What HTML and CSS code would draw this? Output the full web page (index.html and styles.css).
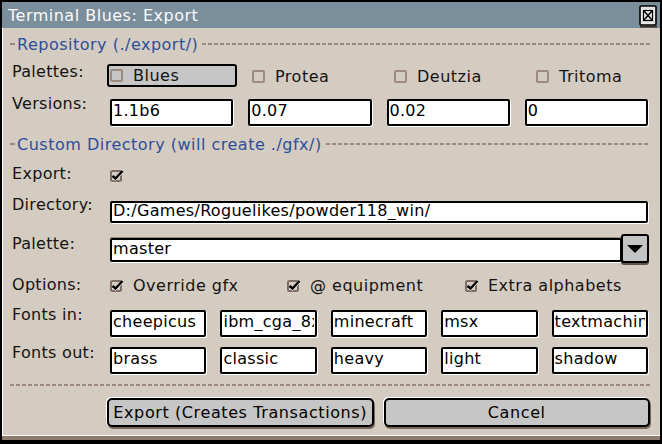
FILE: index.html
```html
<!DOCTYPE html>
<html>
<head>
<meta charset="utf-8">
<title>Terminal Blues: Export</title>
<link rel="stylesheet" href="styles.css">
</head>
<body>
<div class="win">
  <div class="titlebar">
    <span class="title">Terminal Blues: Export</span>
    <span class="close">
      <svg width="18" height="23" viewBox="0 0 18 23">
        <rect x="1" y="1" width="16" height="19" rx="1" fill="#e6e6e6" stroke="#000" stroke-width="1.6"/>
        <rect x="1" y="20.6" width="17" height="2" fill="#3c332e"/>
        <rect x="4.5" y="5.5" width="9" height="10" fill="none" stroke="#000" stroke-width="1.2"/>
        <path d="M5 6 L13 15 M13 6 L5 15" stroke="#000" stroke-width="1.4" fill="none"/>
      </svg>
    </span>
  </div>
  <div class="body">
    <div class="heading h-repo"><span class="lead"></span><span class="htext">Repository (./export/)</span><span class="rule"></span></div>

    <div class="row row-palettes">
      <div class="label lb-2">Palettes:</div>
      <div class="grid4">
        <div class="opt selected"><span class="box"></span>Blues</div>
        <div class="opt"><span class="box"></span>Protea</div>
        <div class="opt"><span class="box"></span>Deutzia</div>
        <div class="opt"><span class="box"></span>Tritoma</div>
      </div>
    </div>

    <div class="row row-versions">
      <div class="label lb-5">Versions:</div>
      <div class="grid4">
        <input class="field" value="1.1b6" readonly>
        <input class="field" value="0.07" readonly>
        <input class="field" value="0.02" readonly>
        <input class="field" value="0" readonly>
      </div>
    </div>

    <div class="heading h-custom"><span class="lead"></span><span class="htext">Custom Directory (will create ./gfx/)</span><span class="rule"></span></div>

    <div class="row row-export">
      <div class="label lb-2">Export:</div>
      <div class="single">
        <svg class="check" width="14" height="13" viewBox="0 0 14 13"><rect x="1" y="2" width="10" height="10" rx="1.5" fill="none" stroke="#7d6d62" stroke-width="2"/><path d="M2.5 8.5 L5.5 11 L12.5 3.5" stroke="#fff" stroke-width="1.6" fill="none"/><path d="M2.5 7 L5.5 9.5 L12.5 2" stroke="#000" stroke-width="2.4" fill="none"/></svg>
      </div>
    </div>

    <div class="row row-dir">
      <div class="label lb-6">Directory:</div>
      <input class="field" value="D:/Games/Roguelikes/powder118_win/" readonly>
    </div>

    <div class="row row-palette">
      <div class="label lb-4">Palette:</div>
      <div class="combo">
        <input class="field" value="master" readonly>
        <span class="drop"><svg width="16" height="8" viewBox="0 0 16 8"><polygon points="0,0 16,0 8,8" fill="#000"/></svg></span>
      </div>
    </div>

    <div class="row row-options">
      <div class="label lb-2">Options:</div>
      <div class="grid3">
        <div class="copt"><svg class="check" width="14" height="13" viewBox="0 0 14 13"><rect x="1" y="2" width="10" height="10" rx="1.5" fill="none" stroke="#7d6d62" stroke-width="2"/><path d="M2.5 8.5 L5.5 11 L12.5 3.5" stroke="#fff" stroke-width="1.6" fill="none"/><path d="M2.5 7 L5.5 9.5 L12.5 2" stroke="#000" stroke-width="2.4" fill="none"/></svg>Override gfx</div>
        <div class="copt"><svg class="check" width="14" height="13" viewBox="0 0 14 13"><rect x="1" y="2" width="10" height="10" rx="1.5" fill="none" stroke="#7d6d62" stroke-width="2"/><path d="M2.5 8.5 L5.5 11 L12.5 3.5" stroke="#fff" stroke-width="1.6" fill="none"/><path d="M2.5 7 L5.5 9.5 L12.5 2" stroke="#000" stroke-width="2.4" fill="none"/></svg>@ equipment</div>
        <div class="copt"><svg class="check" width="14" height="13" viewBox="0 0 14 13"><rect x="1" y="2" width="10" height="10" rx="1.5" fill="none" stroke="#7d6d62" stroke-width="2"/><path d="M2.5 8.5 L5.5 11 L12.5 3.5" stroke="#fff" stroke-width="1.6" fill="none"/><path d="M2.5 7 L5.5 9.5 L12.5 2" stroke="#000" stroke-width="2.4" fill="none"/></svg>Extra alphabets</div>
      </div>
    </div>

    <div class="row row-fin">
      <div class="label lb-5">Fonts in:</div>
      <div class="grid5">
        <input class="field" value="cheepicus" readonly>
        <input class="field" value="ibm_cga_8x8" readonly>
        <input class="field" value="minecraft" readonly>
        <input class="field" value="msx" readonly>
        <input class="field" value="textmachine" readonly>
      </div>
    </div>

    <div class="row row-fout">
      <div class="label lb-4">Fonts out:</div>
      <div class="grid5">
        <input class="field" value="brass" readonly>
        <input class="field" value="classic" readonly>
        <input class="field" value="heavy" readonly>
        <input class="field" value="light" readonly>
        <input class="field" value="shadow" readonly>
      </div>
    </div>

    <div class="divider"></div>

    <div class="buttons">
      <button class="btn">Export (Creates Transactions)</button>
      <button class="btn">Cancel</button>
    </div>
  </div>
  <div class="bottom"></div>
</div>
</body>
</html>
```

FILE: styles.css
```css
* { box-sizing: border-box; }
html, body { margin: 0; padding: 0; background: #d4ccc0; }
body {
  font-family: "DejaVu Sans", sans-serif;
  font-size: 16px;
  letter-spacing: 0.5px;
  color: #141414;
}
.win {
  width: 662px;
  height: 444px;
  display: flex;
  flex-direction: column;
  border: 2px solid #000;
  border-bottom-width: 4px;
  background: #d4ccc0;
  overflow: hidden;
}
.titlebar {
  height: 26px;
  flex: none;
  background: #7a8e9b;
  display: flex;
  align-items: flex-start;
  justify-content: space-between;
  padding: 0 3px 0 6px;
  color: #fafafa;
}
.title { line-height: 19px; margin-top: 4px; letter-spacing: 0.5px; }
.close { display: block; margin-top: 3px; height: 23px; }
.close svg { display: block; }

.body {
  flex: 1;
  display: flex;
  flex-direction: column;
  padding: 0 12px 0 10px;
  box-shadow: inset 1px 0 0 #fff;
}

.heading {
  display: flex;
  align-items: center;
  height: 20px;
  color: #2d4e9b;
  line-height: 19px;
  white-space: nowrap;
  margin-left: -2px;
}
.lead { width: 5px; height: 2px; background: #9c8a7c; margin-right: 2px; }
.rule {
  flex: 1;
  height: 2px;
  margin-left: 4px;
  margin-right: -2px;
  background: repeating-linear-gradient(90deg, #9c8a7c 0 4px, transparent 4px 6px);
}
.h-repo { margin-top: 6px; }
.h-custom { margin-top: 12px; }

.row { display: flex; align-items: flex-start; }
.label { width: 98px; flex: none; line-height: 19px; white-space: nowrap; margin-top: -4px; letter-spacing: 0.3px; }
.lb-2 { margin-top: -2px; }
.lb-4 { margin-top: -4px; }
.lb-5 { margin-top: -5px; }
.lb-6 { margin-top: -6px; }

.row-palettes { margin-top: 10px; height: 24px; }
.row-versions { margin-top: 11px; height: 23px; }
.row-export { margin-top: 12px; height: 16px; }
.row-dir { margin-top: 19px; height: 22px; }
.row-palette { margin-top: 15px; height: 24px; }
.row-options { margin-top: 15px; height: 16px; }
.row-fin { margin-top: 17px; height: 22px; }
.row-fout { margin-top: 15px; height: 23px; }

.grid4 {
  flex: 1;
  display: grid;
  grid-template-columns: repeat(4, 1fr);
  column-gap: 15px;
  height: 100%;
}
.grid5 {
  flex: 1;
  display: grid;
  grid-template-columns: repeat(5, 1fr);
  column-gap: 14px;
  height: 100%;
}
.grid3 {
  flex: 1;
  display: grid;
  grid-template-columns: 177px 178px 1fr;
  height: 100%;
}

.opt {
  display: flex;
  align-items: center;
  height: 24px;
  width: 130px;
  margin-left: -3px;
  padding-left: 1px;
  border: 2px solid transparent;
  border-radius: 3px;
  line-height: 19px;
}
.opt.selected { background: #c6c6c6; border-color: #000; height: 23px; }
.box {
  width: 13px;
  height: 13px;
  flex: none;
  border: 2px solid #9b8a7d;
  border-radius: 2px;
  margin-right: 10px;
}

.field {
  display: block;
  width: 100%;
  min-width: 0;
  height: 100%;
  margin: 0;
  padding: 0 1px 4px;
  border: 2px solid #000;
  border-radius: 2px;
  background: #fff;
  color: #000;
  font: inherit;
  letter-spacing: 0.3px;
  line-height: 15px;
  outline: none;
  box-shadow: 1px 1px 0 #fff;
}
.row-dir .field { flex: 1; }

.single { display: flex; align-items: flex-end; height: 16px; }
.check { display: block; flex: none; }

.combo { flex: 1; display: flex; height: 24px; margin-right: -1px; }
.combo .field { flex: 1; box-shadow: 0 -1px 0 #9c8a7c, 1px 1px 0 #fff; }
.drop {
  flex: none;
  width: 28px;
  height: 29px;
  margin-top: -4px;
  margin-left: -1px;
  background: #c4c4c4;
  border: 2px solid #000;
  border-radius: 3px;
  display: flex;
  align-items: center;
  justify-content: center;
  box-shadow: 0 2px 0 #5e5149;
}
.drop svg { display: block; margin-top: 1px; }

.copt { display: flex; align-items: center; height: 16px; line-height: 19px; white-space: nowrap; }
.copt .check { margin-right: 9px; }

.divider {
  margin: 14px -2px 0 -2px;
  height: 2px;
  background: repeating-linear-gradient(90deg, #9c8a7c 0 4px, transparent 4px 6px);
}

.buttons {
  display: grid;
  grid-template-columns: 1fr 1fr;
  column-gap: 10px;
  margin: 12px -2px 0 95px;
  height: 29px;
}
.btn {
  font: inherit;
  letter-spacing: 0.6px;
  color: #000;
  background: #c6c6c6;
  border: 2px solid #000;
  border-radius: 5px;
  padding: 0;
  line-height: 19px;
  box-shadow: -1px -1px 0 #fff, 1px 2px 0 #76675c;
}

.bottom {
  flex: none;
  height: 5px;
  border-top: 1px solid #fff;
  background: #8c7b6e;
}
```
